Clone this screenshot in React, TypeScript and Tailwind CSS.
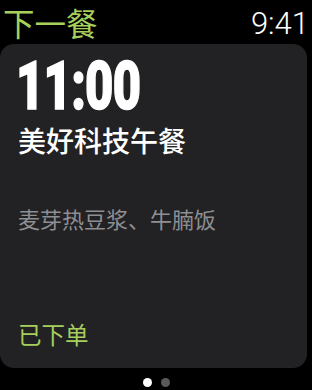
import React from "react";

export default function App() {
  return (
    <div className="w-[312px] h-[390px] bg-black overflow-hidden flex flex-col" style={{ fontFamily: "'Noto Sans CJK SC', 'Noto Sans', sans-serif" }}>
      <div className="h-[44px] flex items-center justify-between pl-[3px] pr-[3px]">
        <span className="text-[31.5px] leading-[44px] text-[#a6cf5b] font-normal">下一餐</span>
        <span className="text-[31px] leading-[44px] text-white font-light mt-[3px]" style={{ fontFamily: "Roboto, 'Liberation Sans', sans-serif" }}>9:41</span>
      </div>
      <div className="w-[307px] h-[324px] bg-[#222224] rounded-[14px] flex flex-col pl-[18px] pt-[10px] pb-[19px]">
        <div className="h-[62px] text-[66px] leading-[66px] font-black text-white origin-left scale-x-[0.74] tracking-[-1px] -ml-[2px] [-webkit-text-stroke:1.5px_white]" style={{ fontFamily: "Roboto, 'Liberation Sans', sans-serif" }}>11:00</div>
        <div className="mt-[8px] text-[28px] leading-[32px] font-medium text-white">美好科技午餐</div>
        <div className="mt-[48px] text-[22px] leading-[28px] text-[#8e8e93]">麦芽热豆浆、牛腩饭</div>
        <div className="mt-auto text-[23.5px] leading-[30px] text-[#a6cf5b]">已下单</div>
      </div>
      <div className="flex justify-center gap-[9px] mt-[10px]">
        <div className="w-[9px] h-[9px] rounded-full bg-white" />
        <div className="w-[9px] h-[9px] rounded-full bg-[#5a5a5c]" />
      </div>
    </div>
  );
}
